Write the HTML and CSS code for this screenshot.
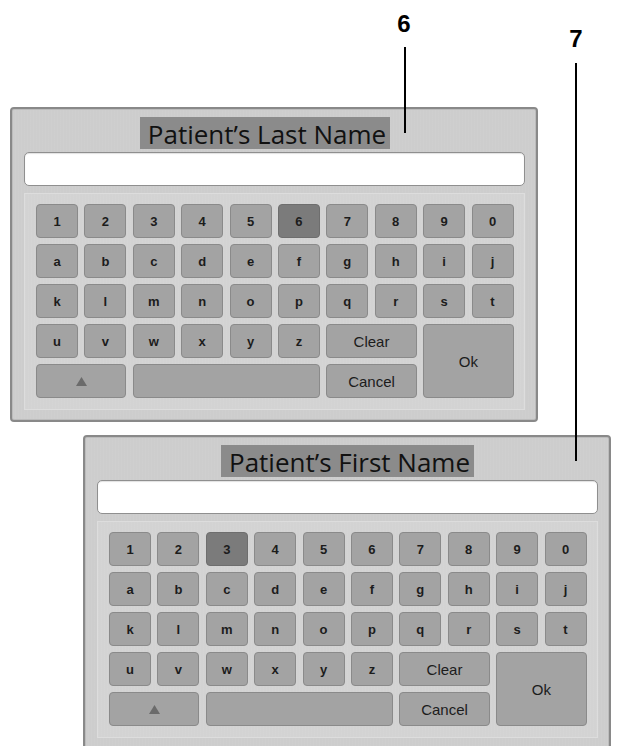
FILE: index.html
```html
<!DOCTYPE html>
<html lang="en">
<head>
    <meta charset="UTF-8">
    <meta name="viewport" content="width=device-width, initial-scale=1.0">
    <title>Patient name keyboard</title>
    <link rel="stylesheet" href="styles.css">
</head>
<body>
    <div class="figure">
        <!-- callouts -->
        <div class="callout callout-6">6</div>
        <div class="leader leader-6"></div>
        <div class="callout callout-7">7</div>
        <div class="leader leader-7"></div>

        <div class="panel panel-last">
            <div class="title-row title-row-shift">
                <span class="title">Patient’s Last Name</span>
            </div>
            <div class="entry"></div>
            <div class="keyboard">
                <div class="key">1</div>
                <div class="key">2</div>
                <div class="key">3</div>
                <div class="key">4</div>
                <div class="key">5</div>
                <div class="key key-active">6</div>
                <div class="key">7</div>
                <div class="key">8</div>
                <div class="key">9</div>
                <div class="key">0</div>
                <div class="key">a</div>
                <div class="key">b</div>
                <div class="key">c</div>
                <div class="key">d</div>
                <div class="key">e</div>
                <div class="key">f</div>
                <div class="key">g</div>
                <div class="key">h</div>
                <div class="key">i</div>
                <div class="key">j</div>
                <div class="key">k</div>
                <div class="key">l</div>
                <div class="key">m</div>
                <div class="key">n</div>
                <div class="key">o</div>
                <div class="key">p</div>
                <div class="key">q</div>
                <div class="key">r</div>
                <div class="key">s</div>
                <div class="key">t</div>
                <div class="key">u</div>
                <div class="key">v</div>
                <div class="key">w</div>
                <div class="key">x</div>
                <div class="key">y</div>
                <div class="key">z</div>
                <div class="key key-word key-clear">Clear</div>
                <div class="key key-word key-ok">Ok</div>
                <div class="key key-shift"><svg width="11" height="9" viewBox="0 0 11 9"><path d="M5.5 0 L11 9 L0 9 Z" fill="#6b6b6b"/></svg></div>
                <div class="key key-space"></div>
                <div class="key key-word key-cancel">Cancel</div>
            </div>
        </div>

        <div class="panel panel-first">
            <div class="title-row">
                <span class="title">Patient’s First Name</span>
            </div>
            <div class="entry"></div>
            <div class="keyboard">
                <div class="key">1</div>
                <div class="key">2</div>
                <div class="key key-active">3</div>
                <div class="key">4</div>
                <div class="key">5</div>
                <div class="key">6</div>
                <div class="key">7</div>
                <div class="key">8</div>
                <div class="key">9</div>
                <div class="key">0</div>
                <div class="key">a</div>
                <div class="key">b</div>
                <div class="key">c</div>
                <div class="key">d</div>
                <div class="key">e</div>
                <div class="key">f</div>
                <div class="key">g</div>
                <div class="key">h</div>
                <div class="key">i</div>
                <div class="key">j</div>
                <div class="key">k</div>
                <div class="key">l</div>
                <div class="key">m</div>
                <div class="key">n</div>
                <div class="key">o</div>
                <div class="key">p</div>
                <div class="key">q</div>
                <div class="key">r</div>
                <div class="key">s</div>
                <div class="key">t</div>
                <div class="key">u</div>
                <div class="key">v</div>
                <div class="key">w</div>
                <div class="key">x</div>
                <div class="key">y</div>
                <div class="key">z</div>
                <div class="key key-word key-clear">Clear</div>
                <div class="key key-word key-ok">Ok</div>
                <div class="key key-shift"><svg width="11" height="9" viewBox="0 0 11 9"><path d="M5.5 0 L11 9 L0 9 Z" fill="#6b6b6b"/></svg></div>
                <div class="key key-space"></div>
                <div class="key key-word key-cancel">Cancel</div>
            </div>
        </div>
    </div>
</body>
</html>
```

FILE: styles.css
```css
html, body{
    margin: 0;
    padding: 0;
    background: #ffffff;
}
body{
    width: 617px;
    height: 746px;
    overflow: hidden;
    font-family: "Liberation Sans", Arial, sans-serif;
}
.figure{
    position: relative;
    padding-top: 107px;
}

/* callout numbers and leader lines drawn over the screens */
.callout{
    position: absolute;
    width: 30px;
    text-align: center;
    font-size: 24px;
    font-weight: bold;
    line-height: 24px;
    color: #000000;
}
.callout-6{
    left: 389px;
    top: 12px;
}
.callout-7{
    left: 561px;
    top: 27px;
}
.leader{
    position: absolute;
    width: 2px;
    background: #000000;
    z-index: 5;
}
.leader-6{
    left: 404px;
    top: 47px;
    height: 86px;
}
.leader-7{
    left: 575px;
    top: 63px;
    height: 398px;
}

/* screen panel */
.panel{
    width: 528px;
    box-sizing: border-box;
    border: 2px solid #898989;
    border-radius: 4px;
    box-shadow: inset 0 0 0 1px #bcbcbc;
    background-color: #cdcdcd;
    background-image: repeating-linear-gradient(90deg, rgba(255, 255, 255, 0.035) 0 1px, transparent 1px 3px);
    padding: 8px 11px 10px 12px;
}
.panel-last{
    margin-left: 10px;
}
.panel-first{
    margin-left: 83px;
    margin-top: 13px;
}
.title-row{
    display: flex;
    justify-content: center;
}
.title-row-shift{
    padding-right: 19px;
}
.title{
    background: #8b8b8b;
    color: #111111;
    font-family: "Open Sans", "Noto Sans", sans-serif;
    font-size: 26px;
    line-height: 30px;
    height: 32px;
    box-sizing: border-box;
    padding: 2px 4px 0 8px;
    white-space: nowrap;
}
.entry{
    margin-top: 3px;
    height: 34px;
    box-sizing: border-box;
    background: #ffffff;
    border: 1px solid #8f8f8f;
    border-radius: 5px;
    box-shadow: inset 0 1px 1px rgba(0, 0, 0, 0.12);
}

/* keypad */
.keyboard{
    margin-top: 7px;
    box-sizing: border-box;
    border: 1px solid #dddddd;
    background-color: #d3d3d3;
    background-image: repeating-linear-gradient(90deg, rgba(255, 255, 255, 0.035) 0 1px, transparent 1px 3px);
    padding: 10px 10px 11px 11px;
    display: grid;
    grid-template-columns: repeat(10, 42px);
    grid-auto-rows: 34px;
    column-gap: 6.4px;
    row-gap: 6px;
}
.key{
    box-sizing: border-box;
    border: 1px solid #8a8a8a;
    border-radius: 4px;
    background: #a3a3a3;
    color: #1c1c1c;
    font-size: 13px;
    font-weight: bold;
    display: flex;
    align-items: center;
    justify-content: center;
    user-select: none;
}
.key-active{
    background: #7b7b7b;
    border-color: #6e6e6e;
}
.key-word{
    font-weight: normal;
    font-size: 15px;
}
.key-clear,
.key-cancel,
.key-shift{
    grid-column: span 2;
}
.key-space{
    grid-column: span 4;
}
.key-ok{
    grid-column: span 2;
    grid-row: span 2;
}
```
